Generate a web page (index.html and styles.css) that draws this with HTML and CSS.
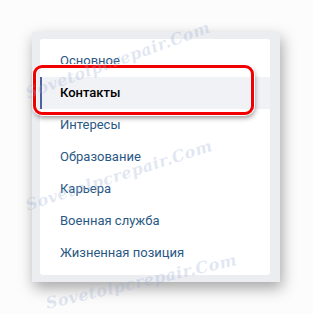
FILE: index.html
```html
<!DOCTYPE html>
<html lang="ru">
<head>
  <meta charset="UTF-8">
  <title>Меню профиля</title>
  <link rel="stylesheet" href="styles.css">
</head>
<body>

  <div class="frame">
    <ul class="menu">
      <li class="menu-item">Основное</li>
      <li class="menu-item active">Контакты</li>
      <li class="menu-item">Интересы</li>
      <li class="menu-item">Образование</li>
      <li class="menu-item">Карьера</li>
      <li class="menu-item">Военная служба</li>
      <li class="menu-item">Жизненная позиция</li>
    </ul>
  </div>

  <div class="highlight"></div>

  <div class="mark mark-1">Sovetolpcrepair.Com</div>
  <div class="mark mark-2">Sovetolpcrepair.Com</div>
  <div class="mark mark-3">Sovetolpcrepair.Com</div>

</body>
</html>
```

FILE: styles.css
```css
body {
  margin: 0;
  width: 313px;
  height: 314px;
  background: #fcfcfc;
  font-family: Roboto, 'Liberation Sans', sans-serif;
  font-size: 13px;
  position: relative;
  overflow: hidden;
}

.frame {
  margin: 32px 0 0 32px;
  width: 230px;
  padding: 7px 10px 7px 8px;
  background: #ebedf0;
  box-shadow: 2px 6px 14px rgba(0,0,0,0.35);
}

.menu {
  list-style: none;
  margin: 0;
  padding: 6px 0 6px;
  background: #fff;
  border-radius: 3px;
}

.menu-item {
  height: 32px;
  line-height: 32px;
  padding-left: 20px;
  color: #2a5885;
  box-sizing: border-box;
}

.menu-item.active {
  background: #f0f2f5;
  color: #000;
  font-weight: 500;
  border-left: 2px solid #50619f;
  padding-left: 18px;
}

.highlight {
  position: absolute;
  left: 33px;
  top: 65px;
  width: 221px;
  height: 50px;
  box-sizing: border-box;
  border: 3px solid #f20000;
  border-radius: 9px;
  box-shadow: inset 0 0 0 1px #fff, 0 0 0 1px #fff, 1px 3px 5px rgba(0,0,0,0.4);
}

.mark {
  position: absolute;
  font-family: 'DejaVu Serif', serif;
  font-style: italic;
  font-weight: bold;
  font-size: 16px;
  letter-spacing: 0.5px;
  color: rgba(150,170,210,0.28);
  transform-origin: left center;
  white-space: nowrap;
}

.mark-1 {
  left: 26px;
  top: 84px;
  transform: rotate(-20deg);
}

.mark-2 {
  left: 26px;
  top: 196px;
  transform: rotate(-18deg);
}

.mark-3 {
  left: 46px;
  top: 294px;
  transform: rotate(-13deg);
}
```
